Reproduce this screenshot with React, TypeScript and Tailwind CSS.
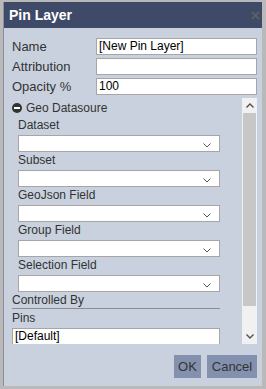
const font = { fontFamily: '"Liberation Sans", Arial, sans-serif' };

function Chevron() {
  return (
    <svg width="8" height="5" viewBox="0 0 8 5" className="absolute right-[8px] top-[7px]">
      <path d="M0.5 0.5 L4 4 L7.5 0.5" fill="none" stroke="#555" strokeWidth="1" />
    </svg>
  );
}

function Select() {
  return (
    <div className="relative h-[17px] w-[202px] bg-white border border-[#a6a6a6]">
      <Chevron />
    </div>
  );
}

function Field({ label }: { label: string }) {
  return (
    <div className="pl-[6px]">
      <div className="h-[18px] flex items-end pb-[1px] text-[12px] text-[#333]">{label}</div>
      <Select />
    </div>
  );
}

function Row({ label, value }: { label: string; value: string }) {
  return (
    <div className="flex items-center h-[17px]">
      <div className="w-[84px] text-[13px] text-[#333]">{label}</div>
      <div className="flex-1 h-[17px] bg-white border border-[#a6a6a6] px-[2px] text-[12px] leading-[15px] text-black">
        {value}
      </div>
    </div>
  );
}

// drawn scrollbar, the headless browser hides the native one
function ScrollBar() {
  return (
    <div className="w-[15px] h-full flex flex-col bg-[#f1f1f1]">
      <div className="h-[15px] flex items-center justify-center">
        <svg width="8" height="5" viewBox="0 0 8 5">
          <path d="M0.5 4.5 L4 1 L7.5 4.5" fill="none" stroke="#505050" strokeWidth="1.4" />
        </svg>
      </div>
      <div className="h-[193px] mx-[1px] bg-[#c7c7c7]" />
      <div className="flex-1" />
      <div className="h-[15px] flex items-center justify-center">
        <svg width="8" height="5" viewBox="0 0 8 5">
          <path d="M0.5 0.5 L4 4 L7.5 0.5" fill="none" stroke="#505050" strokeWidth="1.4" />
        </svg>
      </div>
    </div>
  );
}

export default function App() {
  return (
    <div className="w-[266px] h-[389px] bg-[#b9b9b9] pt-[2px] pl-[3px] overflow-hidden" style={font}>
      <div className="w-[259px] h-[384px] bg-[#c9d1de] border-l border-[#8b909b] flex flex-col">
        <div className="h-[26px] bg-[#3e4a68] flex items-center justify-between pl-[5px] pr-[2px]">
          <span className="text-white font-bold text-[14px]">Pin Layer</span>
          <svg width="9" height="9" viewBox="0 0 9 9">
            <path d="M1 1 L8 8 M8 1 L1 8" stroke="#5e5e62" strokeWidth="2" />
          </svg>
        </div>

        <div className="pl-[8px] pr-[5px] pt-[10px] flex flex-col gap-[3px]">
          <Row label="Name" value="[New Pin Layer]" />
          <Row label="Attribution" value="" />
          <Row label="Opacity %" value="100" />
        </div>

        <div className="ml-[8px] mr-[5px] mt-[3px] h-[246px] flex justify-between">
          <div className="w-[208px] overflow-hidden">
            <div className="h-[19px] flex items-center gap-[4px] text-[12px] text-[#333]">
              <svg width="10" height="10" viewBox="0 0 10 10">
                <circle cx="5" cy="5" r="5" fill="#333" />
                <rect x="2" y="4" width="6" height="2" fill="#fff" />
              </svg>
              <span>Geo Datasoure</span>
            </div>
            <Field label="Dataset" />
            <Field label="Subset" />
            <Field label="GeoJson Field" />
            <Field label="Group Field" />
            <Field label="Selection Field" />
            <div className="h-[17px] flex items-center text-[12px] text-[#333] border-b border-[#8c8c8c]">
              Controlled By
            </div>
            <div className="h-[19px] flex items-end pb-[1px] text-[12px] text-[#333]">Pins</div>
            <div className="h-[17px] bg-white border border-[#a6a6a6] px-[2px] text-[12px] leading-[15px] text-black">
              [Default]
            </div>
          </div>
          <ScrollBar />
        </div>

        <div className="flex justify-end gap-[6px] pr-[5px] mt-[11px]">
          <button className="h-[23px] w-[27px] bg-[#8391ae] text-[13px] text-[#333]">OK</button>
          <button className="h-[23px] w-[50px] bg-[#8391ae] text-[13px] text-[#333]">Cancel</button>
        </div>
      </div>
    </div>
  );
}
